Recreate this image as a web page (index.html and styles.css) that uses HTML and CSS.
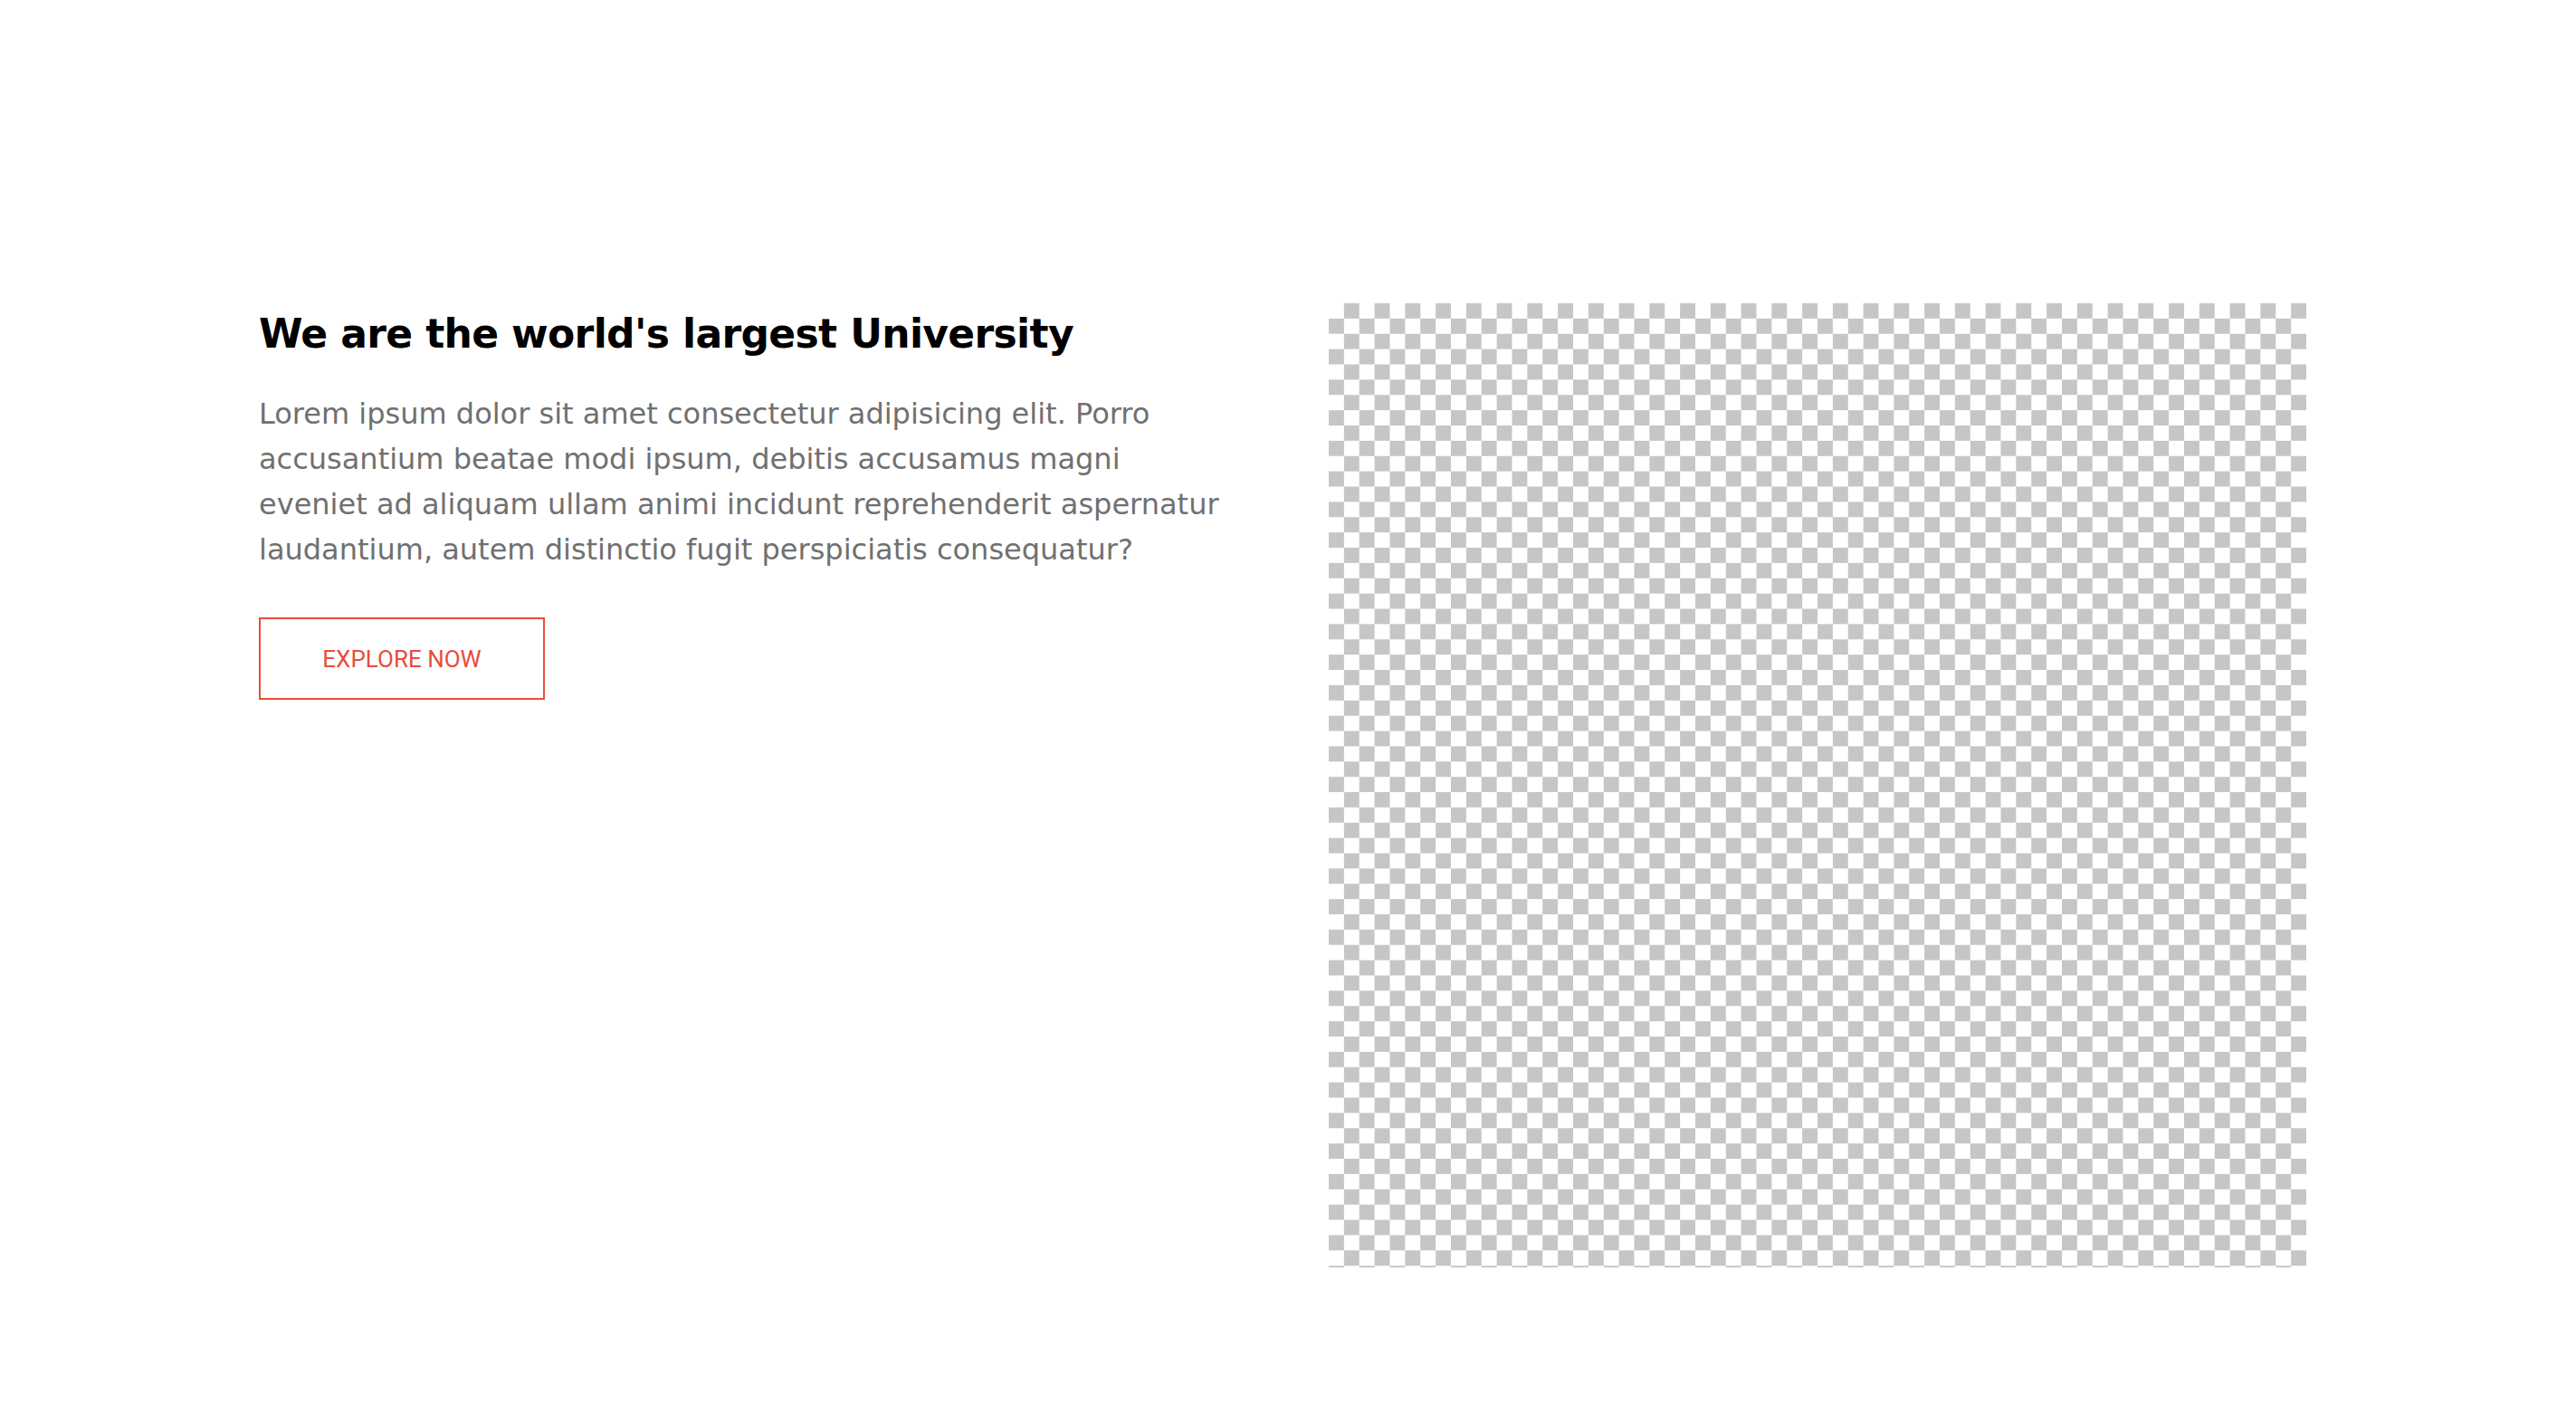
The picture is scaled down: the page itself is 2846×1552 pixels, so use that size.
FILE: index.html
```html
<!DOCTYPE html>
<html lang="en">
<head>
<meta charset="utf-8">
<title>University</title>
<link rel="stylesheet" href="styles.css">
</head>
<body>
<section class="hero">
  <div class="hero-text">
    <h2 class="hero-title">We are the world's largest University</h2>
    <p class="hero-copy">Lorem ipsum dolor sit amet consectetur adipisicing elit. Porro accusantium beatae modi ipsum, debitis accusamus magni eveniet ad aliquam ullam animi incidunt reprehenderit aspernatur laudantium, autem distinctio fugit perspiciatis consequatur?</p>
    <a class="btn-outline" href="#">EXPLORE NOW</a>
  </div>
  <div class="hero-image" role="img" aria-label="placeholder image"></div>
</section>
</body>
</html>
```

FILE: styles.css
```css
* { box-sizing: border-box; }

html, body {
  margin: 0;
  padding: 0;
  background: #ffffff;
}

body {
  font-family: "DejaVu Sans", sans-serif;
}

.hero {
  display: flex;
  justify-content: space-between;
  align-items: flex-start;
  padding: 335px 298px 152px 286px;
}

.hero-text {
  width: 1073px;
  display: flex;
  flex-direction: column;
  align-items: flex-start;
}

.hero-title {
  margin: 8px 0 0;
  font-family: "DejaVu Sans", sans-serif;
  font-weight: 700;
  font-size: 44px;
  line-height: 52px;
  color: #000000;
  letter-spacing: -0.65px;
  white-space: nowrap;
}

.hero-copy {
  margin: 37px 0 0;
  font-size: 32px;
  line-height: 50px;
  color: #707070;
}

.btn-outline {
  margin-top: 50px;
  display: block;
  width: 316px;
  padding: 28.5px 0;
  border: 2px solid #e74c3c;
  color: #e74c3c;
  font-family: Roboto, sans-serif;
  font-size: 26px;
  line-height: 30px;
  text-align: center;
  text-decoration: none;
}

.hero-image {
  width: 1080px;
  height: 1065px;
  flex: none;
  background: repeating-conic-gradient(#c6c6c6 0 25%, #ffffff 0 50%) 0 0 / 33.75px 33.75px;
}
```
